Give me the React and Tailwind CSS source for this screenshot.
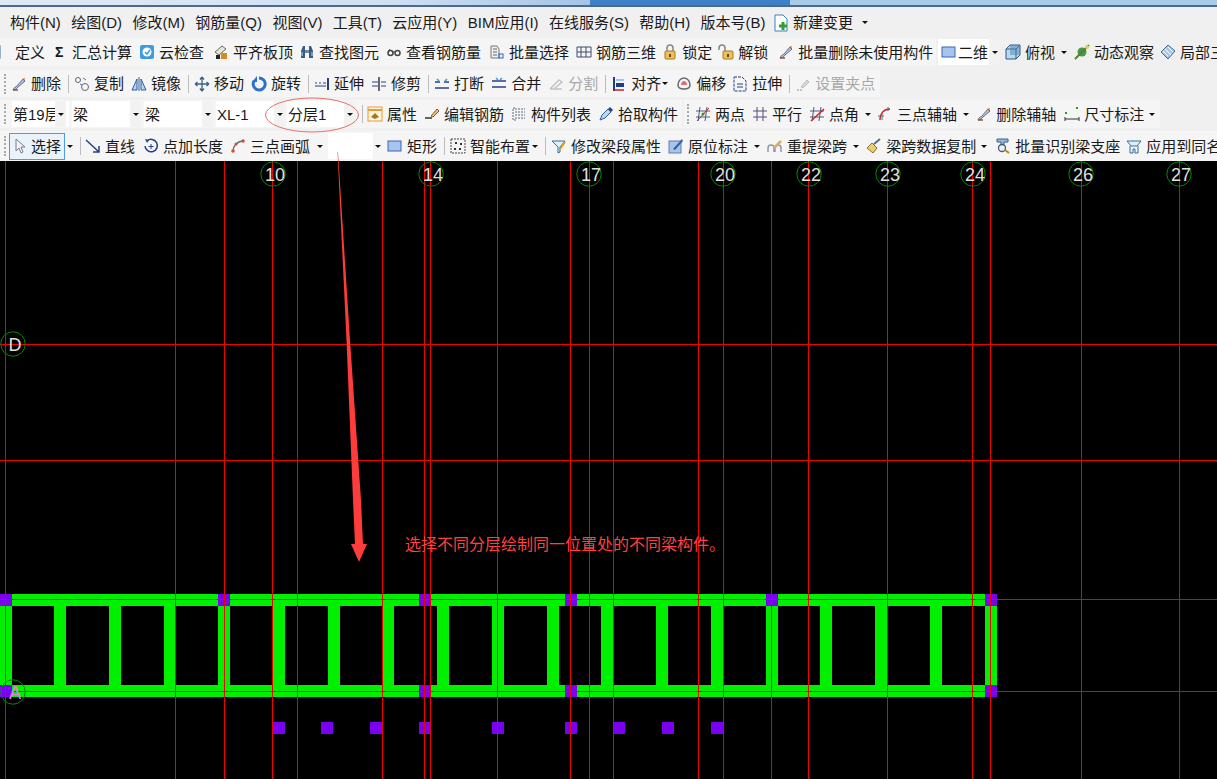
import React from "react";

const verticals = [5, 175, 224, 272, 297, 382, 424, 430, 497, 570, 589, 613, 698, 723, 771, 808, 887, 972, 990, 1081, 1179];
const horizontals = [344, 460, 599, 691];
const ribs = [0, 54, 109, 164, 218, 273, 328, 382, 437, 492, 547, 601, 656, 711, 766, 820, 875, 930, 985];
const purpleTop = [0, 218, 419, 565, 766, 985];
const purpleBottom = [0, 419, 565, 985];
const purpleRow = [273, 321, 370, 419, 492, 565, 613, 662, 711];
const axes = [
    ["10", 273, 174],
    ["14", 431, 174],
    ["17", 589, 174],
    ["20", 723, 174],
    ["22", 809, 174],
    ["23", 888, 174],
    ["24", 973, 174],
    ["26", 1081, 174],
    ["27", 1179, 174],
    ["D", 13, 344],
    ["A", 13, 692],
];

function Ico({ children }) {
    return (
        <svg width="16" height="16" viewBox="0 0 16 16" fill="none" className="shrink-0">
            {children}
        </svg>
    );
}

const brush = (
    <Ico>
        <path d="M2 14c1-3 3-3 4-4l6-7 2 2-7 6c-1 1-2 3-5 3z" fill="#b9c6de" stroke="#5a6c96" />
        <path d="M2 14h5" stroke="#a0522d" strokeWidth="1.5" />
        <path d="M11 3l3-1-1 3z" fill="#d2691e" />
    </Ico>
);
const icons = {
    define: (
        <Ico>
            <rect x="-6" y="2" width="14" height="12" fill="#bcd4ee" stroke="#3a6ea5" />
            <path d="M1 6h5M1 9h5" stroke="#3a6ea5" />
        </Ico>
    ),
    cloud: (
        <Ico>
            <rect x="1" y="1" width="14" height="14" rx="2" fill="#3d9be0" />
            <circle cx="8" cy="8" r="4.5" fill="#fff" />
            <path d="M6 8l2 2 3-4" stroke="#3d9be0" strokeWidth="1.5" />
        </Ico>
    ),
    align: (
        <Ico>
            <path d="M2 8l7-6 4 3-7 6z" fill="#e6e6d8" stroke="#6b6b50" />
            <rect x="3" y="11" width="4" height="4" fill="#222" />
            <rect x="8" y="9" width="6" height="6" fill="#d88a1c" />
        </Ico>
    ),
    binoculars: (
        <Ico>
            <path d="M2 14V7l2-5h2v12zM14 14V7l-2-5h-2v12z" fill="#3a5c80" />
            <rect x="6" y="6" width="4" height="3" fill="#6a8aa8" />
            <path d="M3 8v4M13 8v4" stroke="#c8d8e8" />
        </Ico>
    ),
    glasses: (
        <Ico>
            <circle cx="4.5" cy="9" r="2.5" stroke="#444" strokeWidth="1.5" />
            <circle cx="11.5" cy="9" r="2.5" stroke="#444" strokeWidth="1.5" />
            <path d="M7 8h2M2 8l2-3" stroke="#444" />
        </Ico>
    ),
    batch: (
        <Ico>
            <path d="M2 2h6l2 3v9H2z" fill="#eee" stroke="#777" />
            <path d="M4 5h4M4 8h4M4 11h4" stroke="#667" />
            <rect x="10" y="10" width="4" height="4" stroke="#3060c0" />
        </Ico>
    ),
    rebar3d: (
        <Ico>
            <path d="M1 3h14v10H1zM5 3v10M10 3v10M1 8h14" stroke="#3c4a70" />
        </Ico>
    ),
    lock: (
        <Ico>
            <path d="M5 7V4a3 3 0 016 0v3" stroke="#888" strokeWidth="1.5" />
            <rect x="3" y="7" width="10" height="8" rx="1" fill="#eebf5a" stroke="#a87a20" />
            <rect x="7" y="10" width="2" height="3" fill="#6b4a10" />
        </Ico>
    ),
    unlock: (
        <Ico>
            <path d="M1 6V4a3 3 0 016 0v3" stroke="#888" strokeWidth="1.5" />
            <rect x="5" y="7" width="10" height="8" rx="1" fill="#eebf5a" stroke="#a87a20" />
            <rect x="9" y="10" width="2" height="3" fill="#6b4a10" />
        </Ico>
    ),
    brush,
    square: (
        <Ico>
            <rect x="1" y="3" width="13" height="10" fill="#a8c4ee" stroke="#3a66b0" />
        </Ico>
    ),
    cube: (
        <Ico>
            <path d="M1 5l4-4h10v10l-4 4H1z" fill="#bcd8ee" stroke="#33597f" />
            <path d="M1 5h10v10M11 5l4-4" stroke="#33597f" />
            <path d="M5 1h10v10H5z" fill="#4d85b5" opacity=".5" />
        </Ico>
    ),
    orbit: (
        <Ico>
            <circle cx="8" cy="8" r="4.5" fill="#3ca040" />
            <path d="M1 15L15 1" stroke="#5a7a3a" strokeWidth="2" />
            <circle cx="13" cy="3" r="2" fill="#e8d040" />
        </Ico>
    ),
    part: (
        <Ico>
            <path d="M8 1l7 6-7 8-7-7z" fill="#a8c8e8" stroke="#4a6f96" />
            <path d="M5 5l6 6M8 3l5 5M3 7l5 5" stroke="#fff" />
        </Ico>
    ),
    copy: (
        <Ico>
            <circle cx="4" cy="4" r="2.5" stroke="#667" />
            <circle cx="11" cy="11" r="3.5" stroke="#667" />
            <path d="M9 2l3 2M6 8l2 1" stroke="#3a7bc8" />
        </Ico>
    ),
    mirror: (
        <Ico>
            <path d="M1 14L6 3v11zM15 14L10 3v11z" fill="#bcd4ee" stroke="#2f5f9f" />
            <path d="M8 1v14" stroke="#2f5f9f" />
        </Ico>
    ),
    move: (
        <Ico>
            <path d="M8 1v14M1 8h14M8 1L6 3.5M8 1l2 2.5M8 15l-2-2.5M8 15l2-2.5M1 8l2.5-2M1 8l2.5 2M15 8l-2.5-2M15 8l-2.5 2" stroke="#3c5f8a" strokeWidth="1.3" />
        </Ico>
    ),
    rotate: (
        <Ico>
            <path d="M8 2a6 6 0 11-5 3" stroke="#2f6fd0" strokeWidth="3" />
            <path d="M6 0v6H1z" fill="#2f6fd0" />
        </Ico>
    ),
    extend: (
        <Ico>
            <path d="M1 7h2M5 7h2M9 7h3M1 10h11" stroke="#27408b" />
            <path d="M14 2v12" stroke="#27408b" strokeWidth="2" />
        </Ico>
    ),
    trim: (
        <Ico>
            <path d="M1 6h6M1 10h6M10 6h5M10 10h5" stroke="#27408b" />
            <path d="M8 1v14" stroke="#667" strokeWidth="2" />
        </Ico>
    ),
    breakIcon: (
        <Ico>
            <path d="M1 6h5M10 6h5M1 12h14" stroke="#27408b" strokeWidth="1.5" />
            <path d="M3 3l2 2M13 3l-2 2" stroke="#3a9be0" strokeWidth="1.5" />
        </Ico>
    ),
    merge: (
        <Ico>
            <path d="M1 5h14M1 11h14" stroke="#27408b" strokeWidth="1.5" />
            <path d="M5 2l2 2M11 2L9 4" stroke="#3a9be0" strokeWidth="1.5" />
        </Ico>
    ),
    split: (
        <Ico>
            <path d="M2 13h12M2 13l9-9 3 2-8 7" stroke="#c4c4c4" strokeWidth="1.5" />
        </Ico>
    ),
    alignLeft: (
        <Ico>
            <path d="M3 1v14" stroke="#1f3b8a" strokeWidth="2" />
            <path d="M5 4h8" stroke="#3a9be0" />
            <rect x="5" y="7" width="8" height="4" fill="#1f3b8a" />
            <path d="M3 14h10" stroke="#c02020" strokeWidth="1.5" />
        </Ico>
    ),
    offset: (
        <Ico>
            <path d="M8 2c4 0 6 4 6 7s-2 4-6 4-6-1-6-4 2-7 6-7z" stroke="#667" strokeWidth="1.5" />
            <path d="M8 5c2 0 3 2 3 4H5c0-2 1-4 3-4z" fill="#e07070" />
        </Ico>
    ),
    stretch: (
        <Ico>
            <path d="M2 1h8l4 4v10H2z" stroke="#27408b" strokeDasharray="3 1" />
            <path d="M5 8h6M5 11h6" stroke="#27408b" />
        </Ico>
    ),
    grip: (
        <Ico>
            <path d="M2 14h6" stroke="#c4c4c4" strokeDasharray="2 1" strokeWidth="2" />
            <path d="M6 11l6-7 2 2-6 6z" fill="#d8d8d8" stroke="#bcbcbc" />
        </Ico>
    ),
    props: (
        <Ico>
            <rect x="1" y="1" width="14" height="14" fill="#fff4d8" stroke="#e89a3c" />
            <path d="M1 4h14" stroke="#e89a3c" strokeWidth="2" />
            <path d="M4 11l4-4 4 4-4 2z" fill="#a07820" />
        </Ico>
    ),
    edit: (
        <Ico>
            <path d="M1 12h7" stroke="#333" strokeWidth="1.5" />
            <path d="M7 10l6-7 2 2-6 6z" fill="#e8c080" stroke="#8a5a20" />
        </Ico>
    ),
    list: (
        <Ico>
            <path d="M2 2h3v12H2zM7 3h7M7 6h7M7 9h7M7 12h7" stroke="#5a6a80" strokeDasharray="2 1" />
        </Ico>
    ),
    pick: (
        <Ico>
            <path d="M2 14l2-5 6-6 3 3-6 6z" fill="#bcd4ee" stroke="#2f5f9f" />
            <path d="M10 3l2-2 3 3-2 2z" fill="#27408b" />
        </Ico>
    ),
    twoPoints: (
        <Ico>
            <path d="M5 1L3 15M12 1l-2 14M1 5h14M1 11h14" stroke="#4a5a88" />
            <path d="M2 15L14 2" stroke="#c02020" />
            <circle cx="8" cy="8" r="1.5" fill="#20a020" />
        </Ico>
    ),
    parallel: (
        <Ico>
            <path d="M5 1v14M11 1v14M1 5h14M1 11h14" stroke="#5a4a80" />
        </Ico>
    ),
    angle: (
        <Ico>
            <path d="M5 1L3 15M12 1l-2 14M1 5h14M1 11h14" stroke="#4a5a88" />
            <path d="M2 15L15 3" stroke="#d02020" strokeWidth="1.4" />
        </Ico>
    ),
    arcAxis: (
        <Ico>
            <path d="M3 14C3 7 7 3 13 3" stroke="#d02020" strokeWidth="1.4" />
            <path d="M1 10h6M5 7v7M11 1v4" stroke="#5a6a90" />
        </Ico>
    ),
    dim: (
        <Ico>
            <path d="M1 11v4M15 11v4M1 13h14" stroke="#333" />
            <rect x="1" y="6" width="2" height="2" fill="#20a020" />
            <rect x="12" y="1" width="2" height="2" fill="#20a020" />
        </Ico>
    ),
    cursor: (
        <Ico>
            <path d="M4 1v12l3-3 2 5 2-1-2-5h4z" fill="#f4f4f8" stroke="#7a7a90" />
        </Ico>
    ),
    line: (
        <Ico>
            <path d="M1 2l13 12M14 8v6H8" stroke="#27408b" strokeWidth="1.5" />
        </Ico>
    ),
    pointLen: (
        <Ico>
            <path d="M4 3a6.2 6.2 0 11-2 5" stroke="#27408b" strokeWidth="1.5" />
            <path d="M8 6v5M5.5 8.5h5" stroke="#27408b" />
            <path d="M2 1l4 1-2 3z" fill="#27408b" />
        </Ico>
    ),
    arc: (
        <Ico>
            <path d="M3 13C3 8 7 4 12 3" stroke="#5a6a90" strokeWidth="1.3" />
            <circle cx="3" cy="13" r="1.8" fill="#d05030" />
            <circle cx="6" cy="6" r="1.5" fill="#d05030" />
            <circle cx="13" cy="3" r="1.8" fill="#d05030" />
        </Ico>
    ),
    smart: (
        <Ico>
            <rect x="1" y="1" width="14" height="14" stroke="#444" strokeDasharray="2 1" />
            <path d="M5 4h2v2H5zM10 5h2v2h-2zM4 10h2v2H4zM9 10h2v2H9z" fill="#333" />
        </Ico>
    ),
    modify: (
        <Ico>
            <path d="M1 3h13l-5 6v5l-2 1V9z" fill="#dff0f8" stroke="#2f6f9f" />
            <path d="M9 11l5-7" stroke="#d8a020" strokeWidth="2" />
        </Ico>
    ),
    note: (
        <Ico>
            <rect x="1" y="3" width="12" height="12" fill="#a8c4e8" stroke="#5a80b0" />
            <path d="M5 11L14 1l1 2-8 9z" fill="#3060b0" />
        </Ico>
    ),
    span: (
        <Ico>
            <path d="M1 14v-4a3 3 0 016 0v4M8 14v-4a3 3 0 016 0v4" stroke="#8a9ab0" strokeWidth="1.5" />
            <path d="M6 9l7-7 2 2-7 7z" fill="#d8b070" />
        </Ico>
    ),
    broom: (
        <Ico>
            <path d="M1 10l5-5 5 5-4 5z" fill="#ecd070" stroke="#8a7020" />
            <path d="M8 6l6-5" stroke="#5a6a90" strokeWidth="2" />
        </Ico>
    ),
    recog: (
        <Ico>
            <path d="M2 1h11v3H9v3H6V4H2z" fill="#9ab8d8" stroke="#3a6090" />
            <circle cx="7" cy="10" r="3.5" fill="#e8f0f8" stroke="#4a5a70" strokeWidth="1.3" />
            <path d="M10 12l4 3" stroke="#c08020" strokeWidth="2" />
        </Ico>
    ),
    apply: (
        <Ico>
            <path d="M1 3h14l-4 5H5z" fill="#dff0f8" stroke="#2f6f9f" />
            <path d="M4 8v7h3v-4h2v4h3V8" stroke="#2f6f9f" />
        </Ico>
    ),
};

function Tool({ icon, label, className = "", muted = false }) {
    return (
        <div className={`flex items-center gap-[4px] shrink-0 ${className}`}>
            {icons[icon]}
            <span className={muted ? "text-[#a8a8a8]" : ""}>{label}</span>
        </div>
    );
}

function Caret({ className = "" }) {
    return <span className={`shrink-0 w-0 h-0 border-x-[3px] border-x-transparent border-t-[3px] border-t-[#111] ${className}`} />;
}

function Sep({ className = "" }) {
    return <span className={`shrink-0 w-px h-[18px] bg-[#bdbdbd] ${className}`} />;
}

function Grip({ className = "" }) {
    return <span className={`shrink-0 w-[2px] h-[20px] border-l-2 border-dotted border-[#a9a9a9] ${className}`} />;
}

function Combo({ label, className = "", textWidth = "" }) {
    return (
        <div className={`flex items-center h-[26px] bg-white shrink-0 ${className}`}>
            <span className={`pl-[1px] overflow-hidden whitespace-nowrap flex-1 ${textWidth}`}>{label}</span>
            <span className="w-[11px] h-full bg-[#f2f2f2] flex items-center justify-center">
                <Caret />
            </span>
        </div>
    );
}

function Drawing() {
    return (
        <svg width="1217" height="618" viewBox="0 161 1217 618" className="block">
            <g shapeRendering="crispEdges">
                <rect x="0" y="594" width="997" height="12" fill="#00f000" />
                <rect x="0" y="685" width="997" height="12" fill="#00f000" />
                {ribs.map((x) => (
                    <rect key={x} x={x} y="594" width="12" height="103" fill="#00f000" />
                ))}
                {purpleTop.map((x) => (
                    <rect key={x} x={x} y="594" width="12" height="12" fill="#7a00f0" />
                ))}
                {purpleBottom.map((x) => (
                    <rect key={x} x={x} y="685" width="12" height="12" fill="#7a00f0" />
                ))}
                {purpleRow.map((x) => (
                    <rect key={x} x={x} y="722" width="12" height="12" fill="#7a00f0" />
                ))}
                {verticals.map((x) => (
                    <rect key={x} x={x} y="161" width="1" height="618" fill="#f00000" />
                ))}
                {horizontals.map((y) => (
                    <rect key={y} x="0" y={y} width="1217" height="1" fill="#f00000" />
                ))}
            </g>
            {axes.map(([label, x, y]) => (
                <g key={label}>
                    <circle cx={x} cy={y} r="12.2" fill="none" stroke="#008a00" />
                    <text
                        x={x + 2}
                        y={y + 6.5}
                        textAnchor="middle"
                        fontSize="18"
                        fontFamily="'Liberation Sans', sans-serif"
                        fill={label === "A" ? "#e080f0" : "#e0e0e0"}
                    >
                        {label}
                    </text>
                </g>
            ))}
            <text x="405" y="550" fontSize="16" fontFamily="'Noto Sans CJK SC', sans-serif" fill="#ff4040">
                选择不同分层绘制同一位置处的不同梁构件。
            </text>
        </svg>
    );
}

export default function App() {
    return (
        <div className="relative w-[1217px] h-[779px] overflow-hidden bg-black text-[15px] leading-none text-[#1a1a1a] font-['Liberation_Sans','Noto_Sans_CJK_SC',sans-serif]">
            {/* title bar sliver */}
            <div className="h-[7px] flex border-b-2 border-[#4c6a8c]">
                <div className="w-[390px] bg-gradient-to-r from-[#dfe9f4] to-[#cfe0f3]" />
                <div className="w-[200px] bg-gradient-to-r from-[#cfe0f3] to-[#a5c4e6]" />
                <div className="w-[200px] bg-[#3f80c8]" />
                <div className="flex-1 bg-[#a9cbea]" />
            </div>

            {/* menu */}
            <div className="h-[31px] bg-[#f0f0f0] flex items-center gap-[10.4px] pl-[10px] whitespace-nowrap">
                <span>构件(N)</span>
                <span>绘图(D)</span>
                <span>修改(M)</span>
                <span>钢筋量(Q)</span>
                <span>视图(V)</span>
                <span>工具(T)</span>
                <span>云应用(Y)</span>
                <span>BIM应用(I)</span>
                <span>在线服务(S)</span>
                <span>帮助(H)</span>
                <span>版本号(B)</span>
                <div className="flex items-center gap-[4px] -ml-[3px]">
                    <svg width="16" height="18" viewBox="0 0 16 18" fill="none">
                        <path d="M2 1h8l4 4v12H2z" fill="#fff" stroke="#3a80c0" />
                        <path d="M6 12h8M10 8v8" stroke="#30a030" strokeWidth="3" />
                    </svg>
                    <span>新建变更</span>
                    <Caret className="ml-[5px]" />
                </div>
            </div>

            {/* toolbars */}
            <div className="h-[123px] bg-[#f0f0f0] flex flex-col whitespace-nowrap">
                <div className="h-[28px] flex items-center overflow-hidden">
                    <div className="h-full w-[936px] shrink-0 flex items-center bg-[#f5f5f5]">
                        <span className="w-[15px] -ml-[8px] mr-[8px] shrink-0">{icons.define}</span>
                        <span>定义</span>
                        <span className="ml-[10px] w-[17px] shrink-0 font-bold text-[14px]">Σ</span>
                        <span>汇总计算</span>
                        <Tool icon="cloud" label="云检查" className="ml-[7px]" />
                        <Tool icon="align" label="平齐板顶" className="ml-[9px]" />
                        <Tool icon="binoculars" label="查找图元" className="ml-[6px]" />
                        <Tool icon="glasses" label="查看钢筋量" className="ml-[7px]" />
                        <Tool icon="batch" label="批量选择" className="ml-[8px]" />
                        <Tool icon="rebar3d" label="钢筋三维" className="ml-[7px]" />
                        <Tool icon="lock" label="锁定" className="ml-[6px]" />
                        <Tool icon="unlock" label="解锁" className="ml-[6px]" />
                        <Tool icon="brush" label="批量删除未使用构件" className="ml-[10px]" />
                    </div>
                    <div className="ml-[2px] h-[26px] w-[62px] bg-white shrink-0 flex items-center pl-[3px] gap-[1px]">
                        {icons.square}
                        <span>二维</span>
                        <span className="ml-auto w-[11px] h-full bg-[#f2f2f2] flex items-center justify-center">
                            <Caret />
                        </span>
                    </div>
                    <Tool icon="cube" label="俯视" className="ml-[5px]" />
                    <Caret className="ml-[6px]" />
                    <Tool icon="orbit" label="动态观察" className="ml-[7px]" />
                    <Tool icon="part" label="局部三维" className="ml-[6px]" />
                </div>

                <div className="h-[4px]" />

                <div className="h-[27px] w-[880px] flex items-center bg-[#f5f5f5] pl-[4px]">
                    <Grip />
                    <Tool icon="brush" label="删除" className="ml-[5px]" />
                    <Sep className="ml-[7px]" />
                    <Tool icon="copy" label="复制" className="ml-[5px]" />
                    <Tool icon="mirror" label="镜像" className="ml-[7px]" />
                    <Sep className="ml-[7px]" />
                    <Tool icon="move" label="移动" className="ml-[5px]" />
                    <Tool icon="rotate" label="旋转" className="ml-[7px]" />
                    <Sep className="ml-[7px]" />
                    <Tool icon="extend" label="延伸" className="ml-[5px]" />
                    <Tool icon="trim" label="修剪" className="ml-[7px]" />
                    <Sep className="ml-[7px]" />
                    <Tool icon="breakIcon" label="打断" className="ml-[5px]" />
                    <Tool icon="merge" label="合并" className="ml-[7px]" />
                    <Tool icon="split" label="分割" className="ml-[7px]" muted />
                    <Sep className="ml-[7px]" />
                    <Tool icon="alignLeft" label="对齐" className="ml-[5px]" />
                    <Caret className="ml-[1px]" />
                    <Tool icon="offset" label="偏移" className="ml-[8px]" />
                    <Tool icon="stretch" label="拉伸" className="ml-[6px]" />
                    <Sep className="ml-[7px]" />
                    <Tool icon="grip" label="设置夹点" className="ml-[5px]" muted />
                </div>

                <div className="h-[3px]" />

                <div className="h-[28px] flex items-center bg-[#f5f5f5] pl-[4px] overflow-hidden">
                    <Grip />
                    <Combo label="第19层" className="ml-[6px] w-[57px]" textWidth="max-w-[43px]" />
                    <Combo label="梁" className="ml-[3px] w-[69px]" />
                    <Combo label="梁" className="ml-[3px] w-[69px]" />
                    <Combo label="XL-1" className="ml-[3px] w-[69px]" />
                    <Combo label="分层1" className="ml-[2px] w-[68px]" />
                    <Sep className="ml-[7px]" />
                    <Tool icon="props" label="属性" className="ml-[4px]" />
                    <Tool icon="edit" label="编辑钢筋" className="ml-[7px]" />
                    <Tool icon="list" label="构件列表" className="ml-[7px]" />
                    <Tool icon="pick" label="拾取构件" className="ml-[7px]" />
                    <span className="ml-[4px] w-[2px] h-full bg-[#f0f0f0] shrink-0" />
                    <Grip className="ml-[3px]" />
                    <Tool icon="twoPoints" label="两点" className="ml-[6px]" />
                    <Tool icon="parallel" label="平行" className="ml-[7px]" />
                    <Tool icon="angle" label="点角" className="ml-[7px]" />
                    <Caret className="ml-[6px]" />
                    <Tool icon="arcAxis" label="三点辅轴" className="ml-[6px]" />
                    <Caret className="ml-[6px]" />
                    <Tool icon="brush" label="删除辅轴" className="ml-[7px]" />
                    <Tool icon="dim" label="尺寸标注" className="ml-[8px]" />
                    <Caret className="ml-[5px]" />
                    <span className="ml-[5px] flex-1 self-stretch bg-[#f0f0f0]" />
                </div>

                <div className="h-[3px]" />

                <div className="h-[30px] flex items-center bg-[#f5f5f5] pl-[4px] overflow-hidden">
                    <Grip />
                    <div className="ml-[3px] h-[27px] w-[56px] shrink-0 flex items-center gap-[3px] pl-[2px] bg-[#eaf3fb] border border-[#4a9be8]">
                        {icons.cursor}
                        <span>选择</span>
                    </div>
                    <Caret className="ml-[2px]" />
                    <Sep className="ml-[7px]" />
                    <Tool icon="line" label="直线" className="ml-[4px]" />
                    <Tool icon="pointLen" label="点加长度" className="ml-[8px]" />
                    <Tool icon="arc" label="三点画弧" className="ml-[7px]" />
                    <Caret className="ml-[7px]" />
                    <div className="ml-[5px] h-[26px] w-[45px] bg-white shrink-0" />
                    <Caret className="ml-[2px]" />
                    <Tool icon="square" label="矩形" className="ml-[6px]" />
                    <Sep className="ml-[7px]" />
                    <Tool icon="smart" label="智能布置" className="ml-[5px]" />
                    <Caret className="ml-[2px]" />
                    <Sep className="ml-[7px]" />
                    <Tool icon="modify" label="修改梁段属性" className="ml-[5px]" />
                    <Tool icon="note" label="原位标注" className="ml-[7px]" />
                    <Caret className="ml-[6px]" />
                    <Tool icon="span" label="重提梁跨" className="ml-[7px]" />
                    <Caret className="ml-[6px]" />
                    <Tool icon="broom" label="梁跨数据复制" className="ml-[7px]" />
                    <Caret className="ml-[5px]" />
                    <Tool icon="recog" label="批量识别梁支座" className="ml-[8px]" />
                    <Tool icon="apply" label="应用到同名" className="ml-[6px]" />
                </div>
            </div>

            {/* drawing area */}
            <Drawing />

            {/* hand-drawn annotation on top of the screenshot */}
            <svg width="1217" height="779" className="absolute inset-0 pointer-events-none">
                <ellipse cx="312" cy="115" rx="46.5" ry="17" fill="none" stroke="#e8706a" />
                <path d="M337.5 152L338 152L350 340L361 500L363 544L367 544L359 562L351 544L355 544L353 500L346.5 340z" fill="#ff3c3c" />
            </svg>
        </div>
    );
}
